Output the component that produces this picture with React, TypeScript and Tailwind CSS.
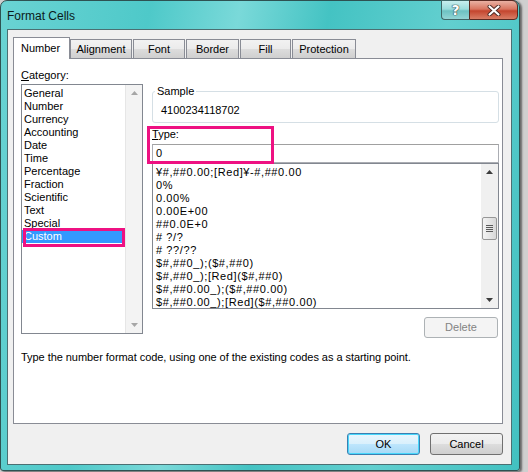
import React from 'react';

const categories = [
  'General',
  'Number',
  'Currency',
  'Accounting',
  'Date',
  'Time',
  'Percentage',
  'Fraction',
  'Scientific',
  'Text',
  'Special',
  'Custom',
];

const formats = [
  '¥#,##0.00;[Red]¥-#,##0.00',
  '0%',
  '0.00%',
  '0.00E+00',
  '##0.0E+0',
  '# ?/?',
  '# ??/??',
  '$#,##0_);($#,##0)',
  '$#,##0_);[Red]($#,##0)',
  '$#,##0.00_);($#,##0.00)',
  '$#,##0.00_);[Red]($#,##0.00)',
];

const tabs = [
  { label: 'Alignment', cls: 'w-[62px]' },
  { label: 'Font', cls: 'w-[52px] ml-[1px]' },
  { label: 'Border', cls: 'w-[53px] ml-[1px]' },
  { label: 'Fill', cls: 'w-[51px] ml-[1px]' },
  { label: 'Protection', cls: 'w-[64px] ml-[1px]' },
];

function Arrow({ up, disabled }: { up?: boolean; disabled?: boolean }) {
  return (
    <svg width="7" height="4" viewBox="0 0 7 4">
      <path
        d={up ? 'M0 4 L3.5 0 L7 4 Z' : 'M0 0 L3.5 4 L7 0 Z'}
        fill={disabled ? '#a6a6a6' : '#3c3c3c'}
      />
    </svg>
  );
}

export default function App() {
  return (
    <div className="w-[528px] h-[472px] bg-[#cfcfcf] overflow-hidden font-['Liberation_Sans',Arial,sans-serif] text-[11px] leading-[13px] text-black">
      <div className="w-[520px] h-[471px] flex flex-col rounded-t-[7px] rounded-b-[3px] border border-[#2e5252] bg-[linear-gradient(100deg,#6ad3d3_0%,#4ec9c9_25%,#7ad9d9_40%,#44c3c3_55%,#62cfcf_75%,#42c1c1_100%)] shadow-[2px_1px_2px_rgba(0,0,0,0.5)]">
        {/* Title bar */}
        <div className="h-[28px] flex items-start justify-between">
          <span className="ml-[6px] mt-[8px] text-[12px] leading-[14px] text-[#0b1a1a]">Format Cells</span>
          <div className="flex -mt-px mr-[1px]">
            <div className="w-[28px] h-[20px] flex items-center justify-center rounded-bl-[4px] border border-r-0 border-[#3f6767] bg-[linear-gradient(#c8eeee,#9bdcdc_45%,#6dc2c2_55%,#93d6d6)]">
              <span className="text-white font-bold text-[14px] leading-[14px] font-['DejaVu_Sans',sans-serif] [text-shadow:0_0_1px_#2c4848,0_0_1px_#2c4848,0_0_1px_#2c4848]">?</span>
            </div>
            <div className="w-[49px] h-[20px] flex items-center justify-center rounded-br-[4px] rounded-tr-[6px] border border-[#5a2a22] bg-[linear-gradient(#e9b1a3,#d87560_45%,#c4452e_55%,#d97e66)]">
              <svg width="14" height="11" viewBox="0 0 14 11">
                <path d="M2.5 1.5 L11.5 9.5 M11.5 1.5 L2.5 9.5" stroke="#4a2a24" strokeWidth="4" strokeLinecap="round" />
                <path d="M2.5 1.5 L11.5 9.5 M11.5 1.5 L2.5 9.5" stroke="#ffffff" strokeWidth="2.2" strokeLinecap="round" />
              </svg>
            </div>
          </div>
        </div>

        {/* Client area */}
        <div className="ml-[6px] w-[505px] h-[436px] border border-[#4b6f72] bg-[#f0f0f0] flex flex-col">
          {/* Tabs */}
          <div className="mt-[7px] ml-[5px] h-[22px] flex items-end relative z-10 -mb-px">
            <div className="w-[57px] h-[22px] bg-white border border-b-0 border-[#898c95] flex items-center pl-[7px] pb-[1px]">
              Number
            </div>
            {tabs.map((t) => (
              <div
                key={t.label}
                className={`${t.cls} h-[20px] border border-[#898c95] bg-[linear-gradient(#f2f2f2,#ebebeb_50%,#dddddd_50%,#cfcfcf)] flex items-center justify-center`}
              >
                {t.label}
              </div>
            ))}
          </div>

          {/* Tab panel */}
          <div className="ml-[5px] w-[490px] h-[366px] border border-[#898c95] bg-white flex flex-col pl-[7px]">
            <div className="flex">
              {/* Category column */}
              <div className="w-[122px] flex flex-col">
                <div className="mt-[10px] h-[13px]">
                  <span className="underline">C</span>ategory:
                </div>
                <div className="mt-[2px] h-[250px] border border-[#828790] flex">
                  <div className="flex-1 pt-[2px] flex flex-col">
                    {categories.map((c) => (
                      <div
                        key={c}
                        className={
                          c === 'Custom'
                            ? 'h-[13px] pl-[2px] bg-[#3399ff] text-white'
                            : 'h-[13px] pl-[2px]'
                        }
                      >
                        {c}
                      </div>
                    ))}
                  </div>
                  <div className="w-[17px] bg-[#f3f3f3] border-l border-[#e6e6e6] flex flex-col items-center justify-between py-[6px]">
                    <Arrow up disabled />
                    <Arrow disabled />
                  </div>
                </div>
              </div>

              {/* Right column */}
              <div className="ml-[9px] w-[347px] flex flex-col">
                <div className="mt-[32px] h-[32px] relative rounded-[3px] border border-[#d5dfe5] pl-[8px] pt-[12px]">
                  <span className="absolute -top-[7px] left-[2px] bg-white px-[2px]">Sample</span>
                  4100234118702
                </div>
                <div className="mt-[5px] h-[13px]">
                  <span className="underline">T</span>ype:
                </div>
                <div className="mt-[3px] h-[19px] border border-[#abadb3] border-t-[#a0a0a0] flex items-center pl-[3px]">
                  0
                </div>
                <div className="h-[146px] border border-[#828790] flex">
                  <div className="flex-1 pt-[2px] pl-[3px] flex flex-col overflow-hidden tracking-[0.6px]">
                    {formats.map((f) => (
                      <div key={f} className="h-[13px] whitespace-nowrap">
                        {f}
                      </div>
                    ))}
                  </div>
                  <div className="w-[17px] bg-[#f0f0f0] flex flex-col items-center py-[6px]">
                    <Arrow up />
                    <div className="mt-[43px] w-[15px] h-[23px] rounded-[2px] border border-[#979797] bg-[linear-gradient(90deg,#f3f3f3,#e6e6e6_50%,#d8d8d8)] flex flex-col items-center justify-center gap-[1px]">
                      <div className="w-[7px] h-[1px] bg-[#5a5a5a]" />
                      <div className="w-[7px] h-[1px] bg-[#5a5a5a]" />
                      <div className="w-[7px] h-[1px] bg-[#5a5a5a]" />
                      <div className="w-[7px] h-[1px] bg-[#5a5a5a]" />
                    </div>
                    <div className="flex-1" />
                    <Arrow />
                  </div>
                </div>
                <div className="mt-[8px] flex justify-end pr-[1px]">
                  <div className="w-[74px] h-[21px] rounded-[3px] border border-[#adb2b5] bg-[#f4f4f4] text-[#838383] flex items-center justify-center">
                    Delete
                  </div>
                </div>
              </div>
            </div>

            <div className="mt-[13px] h-[13px] tracking-[-0.05px]">
              Type the number format code, using one of the existing codes as a starting point.
            </div>
          </div>

          {/* Buttons */}
          <div className="mt-[9px] mr-[8px] flex justify-end gap-[10px]">
            <div className="w-[73px] h-[22px] rounded-[3px] border border-[#3c7fb1] shadow-[inset_0_0_0_1px_#48d7fb] bg-[linear-gradient(#eaf6fd,#d9f0fc_50%,#bee6fd_50%,#a7d9f5)] flex items-center justify-center">
              OK
            </div>
            <div className="w-[73px] h-[22px] rounded-[3px] border border-[#707070] bg-[linear-gradient(#f2f2f2,#ebebeb_50%,#dddddd_50%,#cfcfcf)] flex items-center justify-center">
              Cancel
            </div>
          </div>
        </div>
      </div>

      {/* Annotation highlights */}
      <div className="absolute left-[23px] top-[228px] w-[102px] h-[19px] border-[3px] border-[#ee1182]" />
      <div className="absolute left-[147px] top-[126px] w-[127px] h-[38px] border-[3px] border-[#ee1182]" />
    </div>
  );
}
